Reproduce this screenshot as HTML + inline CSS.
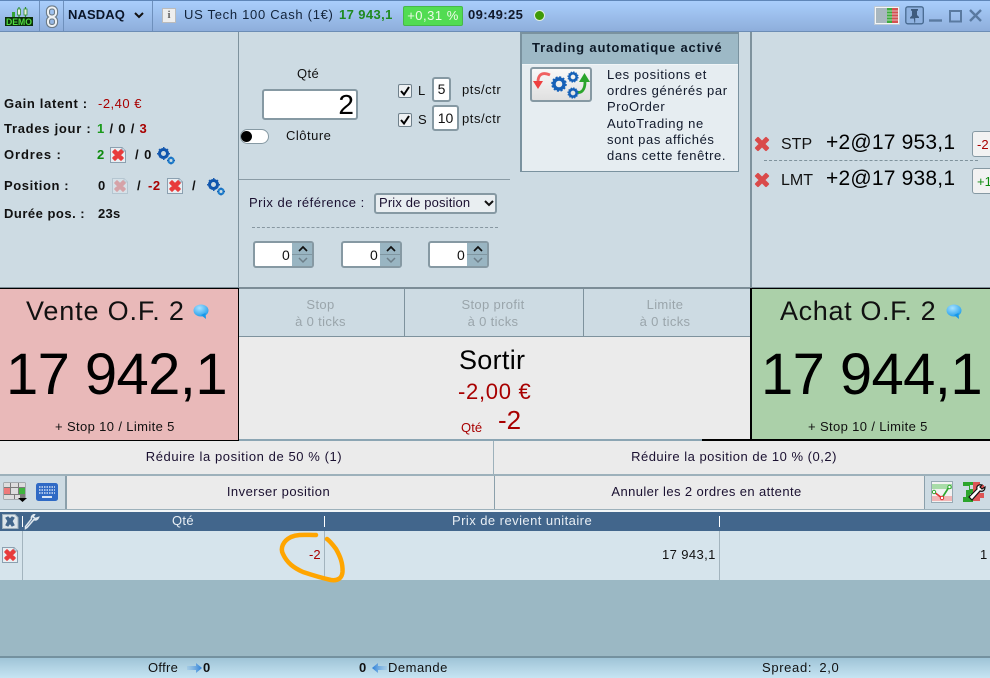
<!DOCTYPE html>
<html><head><meta charset="utf-8"><style>
html,body{margin:0;padding:0;background:#cddbe3}
#p{position:relative;width:990px;height:678px;overflow:hidden;background:#cddbe3;font-family:"Liberation Sans",sans-serif;color:#111;font-size:13px}
.a{position:absolute}
.t{position:absolute;white-space:nowrap;letter-spacing:.55px;line-height:14px}
.b{font-weight:bold}
.r{color:#a80000}.g{color:#0d8a0d}
.c{text-align:center}
.inp{position:absolute;background:#fff;border:2px solid #8699a3;border-radius:3px;box-sizing:border-box;text-align:center}
.btn{position:absolute;background:#ebebeb;text-align:center;color:#1a1030;letter-spacing:.58px;box-sizing:border-box}
</style></head><body><div id="p">
<svg width="0" height="0" style="position:absolute"><defs>
<g id="x"><path d="M2 4 4 2 7 5 10 2 12 4 9 7 12 10 10 12 7 9 4 12 2 10 5 7Z" fill="#e83c3c" stroke="#e83c3c" stroke-width="1.6" stroke-linejoin="round"/></g>
<g id="xb"><path d="M.5.5H12L15.500 4V15.500H.5Z" fill="#e8eef2" stroke="#8ba0b0"/><path d="M12 .5V4H15.500" fill="#cfdbe4" stroke="#8ba0b0"/><use href="#x" x="1" y="1"/></g>
<g id="gear" fill="#1a5cb0"><circle cx="6.500" cy="6.500" r="4" fill="none" stroke="#0f55ad" stroke-width="3"/><path d="M6 0h1.500v2H6zM6 11h1.500v2H6zM0 6h2v1.500H0zM11 6h2v1.500h-2zM1.500 2.500l1-1 1.500 1.500-1 1zM9 9l1-1 1.500 1.500-1 1zM9 3l1.500-1.500 1 1L10 4zM2 10l1.500-1.500 1 1L3 11z"/><circle cx="14" cy="13.500" r="2.600" fill="none" stroke="#1f7ecb" stroke-width="2.200"/><path d="M13.500 9.500h1v1.500h-1zM13.500 16h1v1.500h-1zM10 13h1.500v1H10zM16.500 13H18v1h-1.500z"/></g>
<g id="cgear"><circle r="5" fill="none" stroke="#1560b8" stroke-width="3.400"/><circle r="7" fill="none" stroke="#1560b8" stroke-width="1.600" stroke-dasharray="2 1.660"/></g>
<radialGradient id="bub" cx=".4" cy=".3" r=".8"><stop offset="0" stop-color="#a8e2ff"/><stop offset="1" stop-color="#1698ea"/></radialGradient>
<g id="bb"><ellipse cx="8" cy="6.500" rx="7.500" ry="6" fill="url(#bub)"/><path d="M8 11 13 15 12.500 9Z" fill="#1698ea"/></g>
</defs></svg>

<!-- header -->
<div class="a" style="left:0;top:0;width:990px;height:32px;background:linear-gradient(#a9cefc,#8eaedb);border-top:1px solid #5f86b8;border-bottom:1px solid #6c8db5;box-sizing:border-box"></div>
<div class="a" style="left:39px;top:1px;width:1px;height:30px;background:#6e90bc"></div>
<div class="a" style="left:63px;top:1px;width:1px;height:30px;background:#6e90bc"></div>
<div class="a" style="left:152px;top:1px;width:1px;height:30px;background:#6e90bc"></div>
<svg class="a" style="left:4px;top:6px" width="30" height="21"><rect x="1" y="11" width="28" height="9" fill="#0b2d0b"/><path d="M9.500 6v5M15 1v10M21.500 1v10" stroke="#2f8f2f" stroke-width="1.200"/><rect x="8" y="6" width="3" height="5" fill="#36a336"/><rect x="13.500" y="3" width="3" height="6" fill="#e8efe0" stroke="#2f8f2f" stroke-width=".8"/><rect x="20" y="3" width="3" height="6" fill="#e8efe0" stroke="#2f8f2f" stroke-width=".8"/><text x="2" y="19" font-family="Liberation Sans" font-size="9" font-weight="bold" fill="#4fdc3f" textLength="26" lengthAdjust="spacingAndGlyphs">DEMO</text></svg>
<svg class="a" style="left:45px;top:5px" width="14" height="23"><g fill="none" stroke="#6d7c88" stroke-width="4.200"><rect x="3" y="2.500" width="8" height="9" rx="3.500"/><rect x="3" y="12.500" width="8" height="8.500" rx="3.500"/></g><g fill="none" stroke="#eef2f5" stroke-width="2"><rect x="3" y="2.500" width="8" height="9" rx="3.500"/><rect x="3" y="12.500" width="8" height="8.500" rx="3.500"/></g></svg>
<div class="t b" style="left:68px;top:8px;letter-spacing:.1px;color:#0a1528">NASDAQ</div>
<svg class="a" style="left:133px;top:11px" width="12" height="9"><path d="M2 2 6 6 10 2" fill="none" stroke="#111" stroke-width="2"/></svg>
<div class="a" style="left:162px;top:8px;width:14px;height:15px;background:#eee;border:1px solid #bbb;box-sizing:border-box;text-align:center;font:bold 11px/13px 'Liberation Serif',serif;color:#666">i</div>
<div class="t" style="left:184px;top:8px;letter-spacing:.7px;color:#12233a">US Tech 100 Cash (1€)</div>
<div class="t b" style="left:339px;top:8px;letter-spacing:.4px;color:#1f8a1f">17 943,1</div>
<div class="a" style="left:403px;top:6px;width:60px;height:20px;background:#52dc52;border:1px solid #46b948;box-sizing:border-box;border-radius:2px;color:#eefbe8;text-align:center;line-height:17px;letter-spacing:.5px">+0,31 %</div>
<div class="t b" style="left:468px;top:8px;letter-spacing:.4px;color:#10182a">09:49:25</div>
<div class="a" style="left:534px;top:10px;width:9px;height:9px;border:1px solid #dfeee0;border-radius:50%;background:#3f9a07"></div>
<svg class="a" style="left:874px;top:6px" width="26" height="19"><rect x=".5" y=".5" width="25" height="18" fill="#f2f4f6" stroke="#bcc9d5"/><rect x="2" y="2" width="11" height="15" fill="#a8b7bf"/><rect x="13" y="2" width="5" height="15" fill="#3cab3c"/><rect x="18" y="2" width="6" height="15" fill="#d65050"/><path d="M13 5h11M13 8h11M13 11h11M13 14h11" stroke="#e8e8e8" stroke-width=".7"/></svg>
<svg class="a" style="left:905px;top:6px" width="20" height="20"><rect x=".8" y=".8" width="17.500" height="17" rx="2" fill="#8fb2e0" stroke="#47698f" stroke-width="1.300"/><path d="M6 3h7v1.500L12 5v4l2 2v1H10.200v4.500L9.500 17 8.800 12.500H5v-1l2-2V5L6 4.500Z" fill="#3e5b7d"/></svg>
<svg class="a" style="left:927px;top:6px" width="58" height="20"><path d="M2 14.500h13" stroke="#5a7aa0" stroke-width="2.400"/><rect x="23" y="5" width="11" height="10.500" fill="none" stroke="#5a7aa0" stroke-width="2"/><path d="M43 4 54 15M54 4 43 15" stroke="#5a7aa0" stroke-width="2.400"/></svg>

<!-- left panel -->
<div class="t b" style="left:4px;top:97px;letter-spacing:.66px">Gain latent :</div>
<div class="t r" style="left:98px;top:97px;letter-spacing:.5px">-2,40 €</div>
<div class="t b" style="left:4px;top:122px;letter-spacing:.72px">Trades jour :</div>
<div class="t b" style="left:97px;top:122px;letter-spacing:.5px;word-spacing:.6px"><span style="color:#1a9a1a">1</span> / 0 / <span class="r">3</span></div>
<div class="t b" style="left:4px;top:148px;letter-spacing:.9px">Ordres :</div>
<div class="t b g" style="left:97px;top:148px">2</div>
<svg class="a" style="left:110px;top:147px" width="16" height="16"><use href="#xb"/></svg>
<div class="t b" style="left:135px;top:148px;word-spacing:.8px">/ 0</div>
<svg class="a" style="left:157px;top:147px" width="20" height="19"><use href="#gear"/></svg>
<div class="t b" style="left:4px;top:179px;letter-spacing:.6px">Position :</div>
<div class="t b" style="left:98px;top:179px">0</div>
<svg class="a" style="left:112px;top:178px;opacity:.35" width="16" height="16"><use href="#xb"/></svg>
<div class="t b" style="left:137px;top:179px">/</div>
<div class="t b r" style="left:148px;top:179px">-2</div>
<svg class="a" style="left:167px;top:178px" width="16" height="16"><use href="#xb"/></svg>
<div class="t b" style="left:192px;top:179px">/</div>
<svg class="a" style="left:207px;top:178px" width="20" height="19"><use href="#gear"/></svg>
<div class="t b" style="left:4px;top:207px;letter-spacing:.5px">Durée pos. :</div>
<div class="t b" style="left:98px;top:207px;letter-spacing:.3px">23s</div>

<div class="a" style="left:238px;top:32px;width:1px;height:256px;background:#7e929d"></div>
<div class="a" style="left:750px;top:32px;width:2px;height:256px;background:#7e929d"></div>
<div class="a" style="left:239px;top:179px;width:271px;height:1px;background:#8a9ba5"></div>

<!-- center controls -->
<div class="t" style="left:297px;top:67px;letter-spacing:.4px">Qté</div>
<div class="inp" style="left:262px;top:89px;width:96px;height:31px;text-align:right;padding-right:2px;font-size:28px;line-height:27px;color:#000">2</div>
<div class="a" style="left:240px;top:129px;width:29px;height:15px;background:#fff;border:1px solid #8699a3;border-radius:8px;box-sizing:border-box"></div>
<div class="a" style="left:241px;top:131px;width:11px;height:11px;background:#000;border-radius:50%"></div>
<div class="t" style="left:286px;top:129px;letter-spacing:.5px">Clôture</div>
<div class="a" style="left:398px;top:84px;width:14px;height:14px;background:#eef1f3;border:1px solid #6f808b;border-radius:2px;box-sizing:border-box"></div>
<svg class="a" style="left:399px;top:85px" width="12" height="12"><path d="M2 6 5 9.500 10 2" fill="none" stroke="#000" stroke-width="2"/></svg>
<div class="a" style="left:398px;top:113px;width:14px;height:14px;background:#eef1f3;border:1px solid #6f808b;border-radius:2px;box-sizing:border-box"></div>
<svg class="a" style="left:399px;top:114px" width="12" height="12"><path d="M2 6 5 9.500 10 2" fill="none" stroke="#000" stroke-width="2"/></svg>
<div class="t" style="left:418px;top:84px">L</div>
<div class="t" style="left:418px;top:113px">S</div>
<div class="inp" style="left:432px;top:77px;width:19px;height:25px;line-height:21px;font-size:14px">5</div>
<div class="inp" style="left:432px;top:105px;width:27px;height:26px;line-height:22px;font-size:14px">10</div>
<div class="t" style="left:462px;top:83px">pts/ctr</div>
<div class="t" style="left:462px;top:112px">pts/ctr</div>

<div class="t" style="left:249px;top:196px;color:#1a1030;letter-spacing:.5px">Prix de référence :</div>
<div class="a" style="left:374px;top:193px;width:123px;height:21px;background:#e9eef1;border:2px solid #8699a3;border-radius:3px;box-sizing:border-box"></div>
<div class="t" style="left:379px;top:196px;color:#1a1030;letter-spacing:.15px">Prix de position</div>
<svg class="a" style="left:483px;top:199px" width="12" height="9"><path d="M2 2 6 6 10 2" fill="none" stroke="#111" stroke-width="2"/></svg>
<div class="a" style="left:252px;top:227px;width:246px;border-top:1px dashed #8797a1"></div>

<!-- spinners -->
<div class="a" style="left:253px;top:241px;width:61px;height:27px;background:#fff;border:2px solid #8699a3;border-radius:3px;box-sizing:border-box"></div>
<div class="a" style="left:292px;top:243px;width:20px;height:23px;background:#99b5c2"></div><div class="a" style="left:292px;top:254px;width:20px;height:1px;background:#7f96a1"></div>
<div class="t" style="left:282px;top:248px;font-size:14px">0</div>
<svg class="a" style="left:294px;top:244px" width="18" height="22"><path d="M5 7 9 3 13 7" fill="none" stroke="#111" stroke-width="1.700"/><path d="M5 14 9 18 13 14" fill="none" stroke="#6d7e88" stroke-width="1.500"/></svg>
<div class="a" style="left:341px;top:241px;width:61px;height:27px;background:#fff;border:2px solid #8699a3;border-radius:3px;box-sizing:border-box"></div>
<div class="a" style="left:380px;top:243px;width:20px;height:23px;background:#99b5c2"></div><div class="a" style="left:380px;top:254px;width:20px;height:1px;background:#7f96a1"></div>
<div class="t" style="left:370px;top:248px;font-size:14px">0</div>
<svg class="a" style="left:382px;top:244px" width="18" height="22"><path d="M5 7 9 3 13 7" fill="none" stroke="#111" stroke-width="1.700"/><path d="M5 14 9 18 13 14" fill="none" stroke="#6d7e88" stroke-width="1.500"/></svg>
<div class="a" style="left:428px;top:241px;width:61px;height:27px;background:#fff;border:2px solid #8699a3;border-radius:3px;box-sizing:border-box"></div>
<div class="a" style="left:467px;top:243px;width:20px;height:23px;background:#99b5c2"></div><div class="a" style="left:467px;top:254px;width:20px;height:1px;background:#7f96a1"></div>
<div class="t" style="left:457px;top:248px;font-size:14px">0</div>
<svg class="a" style="left:469px;top:244px" width="18" height="22"><path d="M5 7 9 3 13 7" fill="none" stroke="#111" stroke-width="1.700"/><path d="M5 14 9 18 13 14" fill="none" stroke="#6d7e88" stroke-width="1.500"/></svg>

<!-- auto trading box -->
<div class="a" style="left:520px;top:32px;width:219px;height:140px;background:#e6edf1;border:2px solid #7a929f;border-bottom-width:1px;border-right-width:1px;box-sizing:border-box"></div>
<div class="a" style="left:522px;top:34px;width:216px;height:30px;background:#9db9c6;border-bottom:1px solid #f0f5f7"></div>
<div class="t b" style="left:532px;top:41px;letter-spacing:.85px;color:#0d1a28">Trading automatique activé</div>
<div class="a" style="left:530px;top:67px;width:62px;height:35px;background:linear-gradient(#f8f8f8,#e0e0e0);border:2px solid #8699a3;border-radius:3px;box-sizing:border-box"></div>
<svg class="a" style="left:533px;top:70px" width="58" height="30"><path d="M17 5C8 1 5 6 5 12" fill="none" stroke="#f06060" stroke-width="2.800"/><path d="M0 11h10L5 19Z" fill="#ee4040"/><path d="M43 22c6 2 9-3 9-10" fill="none" stroke="#2ca52c" stroke-width="2.800"/><path d="M46 12h11L51.500 3Z" fill="#2ca52c"/><g transform="translate(26,14)"><use href="#cgear" /></g><g transform="translate(40,7) scale(.72)"><use href="#cgear"/></g><g transform="translate(40,23) scale(.72)"><use href="#cgear"/></g></svg>
<div class="t" style="left:607px;top:67px;letter-spacing:.6px;line-height:16.200px;color:#10182a">Les positions et<br>ordres générés par<br>ProOrder<br>AutoTrading ne<br>sont pas affichés<br>dans cette fenêtre.</div>

<!-- right -->
<svg class="a" style="left:753px;top:135px" width="18" height="18"><path d="M3 5 5 3 9 7 13 3 15 5 11 9 15 13 13 15 9 11 5 15 3 13 7 9Z" fill="#d94a4a" stroke="#d94a4a" stroke-width="2.200" stroke-linejoin="round"/></svg>
<svg class="a" style="left:753px;top:171px" width="18" height="18"><path d="M3 5 5 3 9 7 13 3 15 5 11 9 15 13 13 15 9 11 5 15 3 13 7 9Z" fill="#d94a4a" stroke="#d94a4a" stroke-width="2.200" stroke-linejoin="round"/></svg>
<div class="t" style="left:781px;top:136px;font-size:16px;line-height:18px;letter-spacing:0">STP</div>
<div class="t" style="left:781px;top:172px;font-size:16px;line-height:18px;letter-spacing:0">LMT</div>
<div class="t" style="left:826px;top:131px;font-size:21px;line-height:24px;letter-spacing:.2px;color:#000">+2@17 953,1</div>
<div class="t" style="left:826px;top:167px;font-size:21px;line-height:24px;letter-spacing:.2px;color:#000">+2@17 938,1</div>
<div class="a" style="left:764px;top:160px;width:214px;border-top:1px dashed #7f929c"></div>
<div class="a" style="left:972px;top:131px;width:30px;height:26px;background:#f2f2f2;border:1px solid #8699a3;border-radius:3px;box-sizing:border-box;font-size:13px;line-height:26px;padding-left:4px;color:#a80000">-2</div>
<div class="a" style="left:972px;top:168px;width:30px;height:26px;background:#f2f2f2;border:1px solid #8699a3;border-radius:3px;box-sizing:border-box;font-size:13px;line-height:26px;padding-left:4px;color:#0d8a0d">+1</div>

<!-- price row -->
<div class="a" style="left:0;top:287px;width:990px;height:2px;background:#7c8d97"></div>
<div class="a" style="left:0;top:288px;width:239px;height:153px;background:#e9b9b9;border:1px solid #000;border-width:1px 1px 1px 0;box-sizing:border-box;overflow:hidden">
<div class="t" style="left:26px;top:7px;font-size:27px;line-height:30px;letter-spacing:.85px;color:#111">Vente O.F. 2</div>
<div class="t" style="left:6px;top:52px;font-size:58px;line-height:68px;letter-spacing:-.6px;color:#000">17 942,1</div>
<div class="t" style="left:55px;top:131px;letter-spacing:.37px">+ Stop 10 / Limite 5</div>
</div>
<svg class="a" style="left:193px;top:304px" width="18" height="18"><use href="#bb"/></svg>
<div class="a" style="left:239px;top:289px;width:511px;height:47px;background:#cddbe3"></div>
<div class="a" style="left:404px;top:289px;width:1px;height:47px;background:#7e929d"></div>
<div class="a" style="left:583px;top:289px;width:1px;height:47px;background:#7e929d"></div>
<div class="a" style="left:239px;top:336px;width:511px;height:1px;background:#7e929d"></div>
<div class="t c" style="left:239px;top:296px;width:163px;line-height:17px;color:#9aa5ab;letter-spacing:.35px">Stop<br>à 0 ticks</div>
<div class="t c" style="left:405px;top:296px;width:176px;line-height:17px;color:#9aa5ab;letter-spacing:.35px">Stop profit<br>à 0 ticks</div>
<div class="t c" style="left:583px;top:296px;width:164px;line-height:17px;color:#9aa5ab;letter-spacing:.35px">Limite<br>à 0 ticks</div>
<div class="a" style="left:239px;top:337px;width:511px;height:103px;background:#ebebeb"></div>
<div class="t" style="left:459px;top:345px;font-size:27px;line-height:30px;letter-spacing:.3px;color:#000">Sortir</div>
<div class="t r" style="left:458px;top:380px;font-size:22px;line-height:24px;letter-spacing:.7px">-2,00 €</div>
<div class="t r" style="left:461px;top:421px;letter-spacing:.1px">Qté</div>
<div class="t r" style="left:498px;top:405px;font-size:26px;line-height:30px;letter-spacing:0">-2</div>
<div class="a" style="left:702px;top:439px;width:48px;height:2px;background:#000"></div>
<div class="a" style="left:239px;top:439px;width:463px;height:2px;background:#8ba5b3"></div>
<div class="a" style="left:750px;top:288px;width:240px;height:153px;background:#abd0a9;border:solid #000;border-width:1px 0 2px 2px;box-sizing:border-box;overflow:hidden">
<div class="t" style="left:28px;top:7px;font-size:27px;line-height:30px;letter-spacing:.64px;color:#111">Achat O.F. 2</div>
<div class="t" style="left:9px;top:52px;font-size:58px;line-height:68px;letter-spacing:-.6px;color:#000">17 944,1</div>
<div class="t" style="left:56px;top:131px;letter-spacing:.37px">+ Stop 10 / Limite 5</div>
</div>
<svg class="a" style="left:946px;top:304px" width="18" height="18"><use href="#bb"/></svg>

<!-- action buttons -->
<div class="a" style="left:0;top:441px;width:990px;height:69px;background:#cddbe3"></div>
<div class="btn" style="left:0;top:441px;width:493px;height:33px;line-height:31px;padding-right:5px">Réduire la position de 50 % (1)</div>
<div class="btn" style="left:494px;top:441px;width:496px;height:33px;line-height:31px;padding-right:16px;letter-spacing:.5px">Réduire la position de 10 % (0,2)</div>
<div class="a" style="left:0;top:474px;width:990px;height:2px;background:#9db1bb"></div>
<div class="a" style="left:493px;top:441px;width:1px;height:33px;background:#9db1bb"></div>
<div class="btn" style="left:67px;top:476px;width:427px;height:33px;line-height:31px;padding-right:4px;letter-spacing:.47px">Inverser position</div>
<div class="btn" style="left:495px;top:476px;width:429px;height:33px;line-height:31px;padding-right:6px;letter-spacing:.4px">Annuler les 2 ordres en attente</div>
<div class="a" style="left:65px;top:476px;width:2px;height:34px;background:#8ba0ab"></div>
<div class="a" style="left:494px;top:476px;width:1px;height:34px;background:#8ba0ab"></div>
<div class="a" style="left:924px;top:476px;width:1px;height:34px;background:#8ba0ab"></div>
<div class="a" style="left:0;top:509px;width:990px;height:1px;background:#9db1bb"></div>
<svg class="a" style="left:3px;top:482px" width="25" height="22"><rect x=".5" y=".5" width="22" height="17" fill="#7b7b7b"/><path d="M1 1h6v4H1zM8 1h7v4H8zM16 1h6v4h-6zM8 6h7v6H8zM1 13h10v4H1zM12 13h5v4h-5z" fill="#ddd"/><rect x="1" y="6" width="6" height="6" fill="#ee7a7a"/><rect x="16" y="6" width="6" height="6" fill="#3fb53f"/><path d="M15 16h9l-4.500 4Z" fill="#000"/></svg>
<svg class="a" style="left:36px;top:483px" width="23" height="19"><rect width="22" height="18" rx="2.500" fill="#2f6ac5"/><path d="M3 4h16M3 7h16M3 10h16" stroke="#cfe0f5" stroke-width="1.400" stroke-dasharray="1.500 1"/><path d="M6 14h10" stroke="#d8e5f5" stroke-width="2"/></svg>
<svg class="a" style="left:931px;top:481px" width="24" height="24"><rect x=".5" y=".5" width="21" height="21" fill="#f2f2f2" stroke="#97aab4"/><rect x="1" y="3" width="20" height="5" fill="#a8dca8"/><rect x="1" y="15" width="20" height="5" fill="#f1b5b5"/><path d="M3 11 11 17" stroke="#e03030" stroke-width="1.700" fill="none"/><path d="M11 17 18 6" stroke="#2fa82f" stroke-width="1.700" fill="none"/><circle cx="3" cy="11" r="1.700" fill="#fff" stroke="#2fa82f"/><circle cx="11" cy="17" r="1.700" fill="#fff" stroke="#e03030"/><circle cx="18.500" cy="6" r="1.700" fill="#fff" stroke="#2fa82f"/></svg>
<svg class="a" style="left:962px;top:481px" width="24" height="22"><path d="M11 1h7v3h4v5h-4v3h4v5h-4v3h-7z" fill="#d55"/><path d="M1 1h10v3H8v4h3v5H8v3h3v5H1v-5h3V9H7V5H1z" fill="#2ca52c"/><path d="M20 4c-3-1-6 1-5 4l-8 8 3 3 8-9c3 1 5-1 5-4l-3 2-2-2z" fill="#fff" stroke="#111" stroke-width="1.200"/></svg>

<!-- table -->
<div class="a" style="left:0;top:510px;width:990px;height:2px;background:#f2f6f8"></div>
<div class="a" style="left:0;top:512px;width:990px;height:19px;background:#42668c"></div>
<svg class="a" style="left:2px;top:514px" width="17" height="15"><path d="M.5.5H13L16 3.500V14.500H.5Z" fill="#dbe4ea" stroke="#9eb0bd"/><path d="M4 4 6 3 8 5 10 3 12 4 10 7 12 11 10 12 8 9 6 12 4 11 6 7Z" fill="#42668c" stroke="#42668c" stroke-width="1.200"/></svg>
<div class="a" style="left:22px;top:516px;width:1px;height:11px;background:#fff"></div>
<svg class="a" style="left:24px;top:514px" width="16" height="16"><path d="M14.500 3.500c-1 2.500-3 3-4.500 2L3 13.500l-1.500 1v-2L7.500 5c-.5-2 .5-4 3-4.500L9 3l2.500 1.500Z" fill="none" stroke="#dfe7ee" stroke-width="1.500"/></svg>
<div class="t" style="left:172px;top:514px;color:#e8eef4;letter-spacing:.3px">Qté</div>
<div class="a" style="left:324px;top:516px;width:1px;height:11px;background:#fff"></div>
<div class="t" style="left:452px;top:514px;color:#e8eef4;letter-spacing:.45px">Prix de revient unitaire</div>
<div class="a" style="left:719px;top:516px;width:1px;height:11px;background:#fff"></div>
<div class="a" style="left:0;top:531px;width:990px;height:49px;background:#d6e4ec"></div>
<div class="a" style="left:22px;top:531px;width:1px;height:49px;background:#a3b4be"></div>
<div class="a" style="left:324px;top:531px;width:1px;height:49px;background:#a3b4be"></div>
<div class="a" style="left:719px;top:531px;width:1px;height:49px;background:#a3b4be"></div>
<svg class="a" style="left:2px;top:547px" width="16" height="16"><use href="#xb"/></svg>
<div class="t r" style="left:309px;top:548px;letter-spacing:0">-2</div>
<div class="t" style="left:662px;top:548px;letter-spacing:.4px">17 943,1</div>
<div class="t" style="left:980px;top:548px">1</div>
<div class="a" style="left:0;top:580px;width:990px;height:76px;background:#9bb8c4"></div>
<svg class="a" style="left:0;top:0" width="990" height="678"><path d="M316 535C305 535 298 534 291 537 283 541 280 548 283 554 287 563 294 568 303 572 312 575 322 578 331 580 338 581 342 578 342.500 572 343 563 340 556 336 549 333 545 330 541 327 539" fill="none" stroke="#ffa500" stroke-width="4.500" stroke-linecap="round" stroke-linejoin="round"/></svg>
<div class="a" style="left:0;top:656px;width:990px;height:2px;background:#74919f"></div>
<div class="a" style="left:0;top:658px;width:990px;height:20px;background:linear-gradient(#9fc4d7,#c6e4f2)"></div>
<div class="t" style="left:148px;top:661px;letter-spacing:.3px">Offre</div>
<svg class="a" style="left:186px;top:663px" width="17" height="10"><defs><linearGradient id="ar"><stop offset="0" stop-color="#7fb4e6" stop-opacity=".3"/><stop offset="1" stop-color="#2a7ed8"/></linearGradient><linearGradient id="al"><stop offset="0" stop-color="#2a7ed8"/><stop offset="1" stop-color="#7fb4e6" stop-opacity=".3"/></linearGradient></defs><path d="M1 3h9V0l6 5-6 5V7H1Z" fill="url(#ar)"/></svg>
<div class="t b" style="left:203px;top:661px">0</div>
<div class="t b" style="left:359px;top:661px">0</div>
<svg class="a" style="left:371px;top:663px" width="17" height="10"><path d="M16 3H7V0L1 5l6 5V7h9Z" fill="url(#al)"/></svg>
<div class="t" style="left:388px;top:661px;letter-spacing:.5px">Demande</div>
<div class="t" style="left:762px;top:661px;letter-spacing:.65px;word-spacing:3px">Spread: 2,0</div>
</div></body></html>
